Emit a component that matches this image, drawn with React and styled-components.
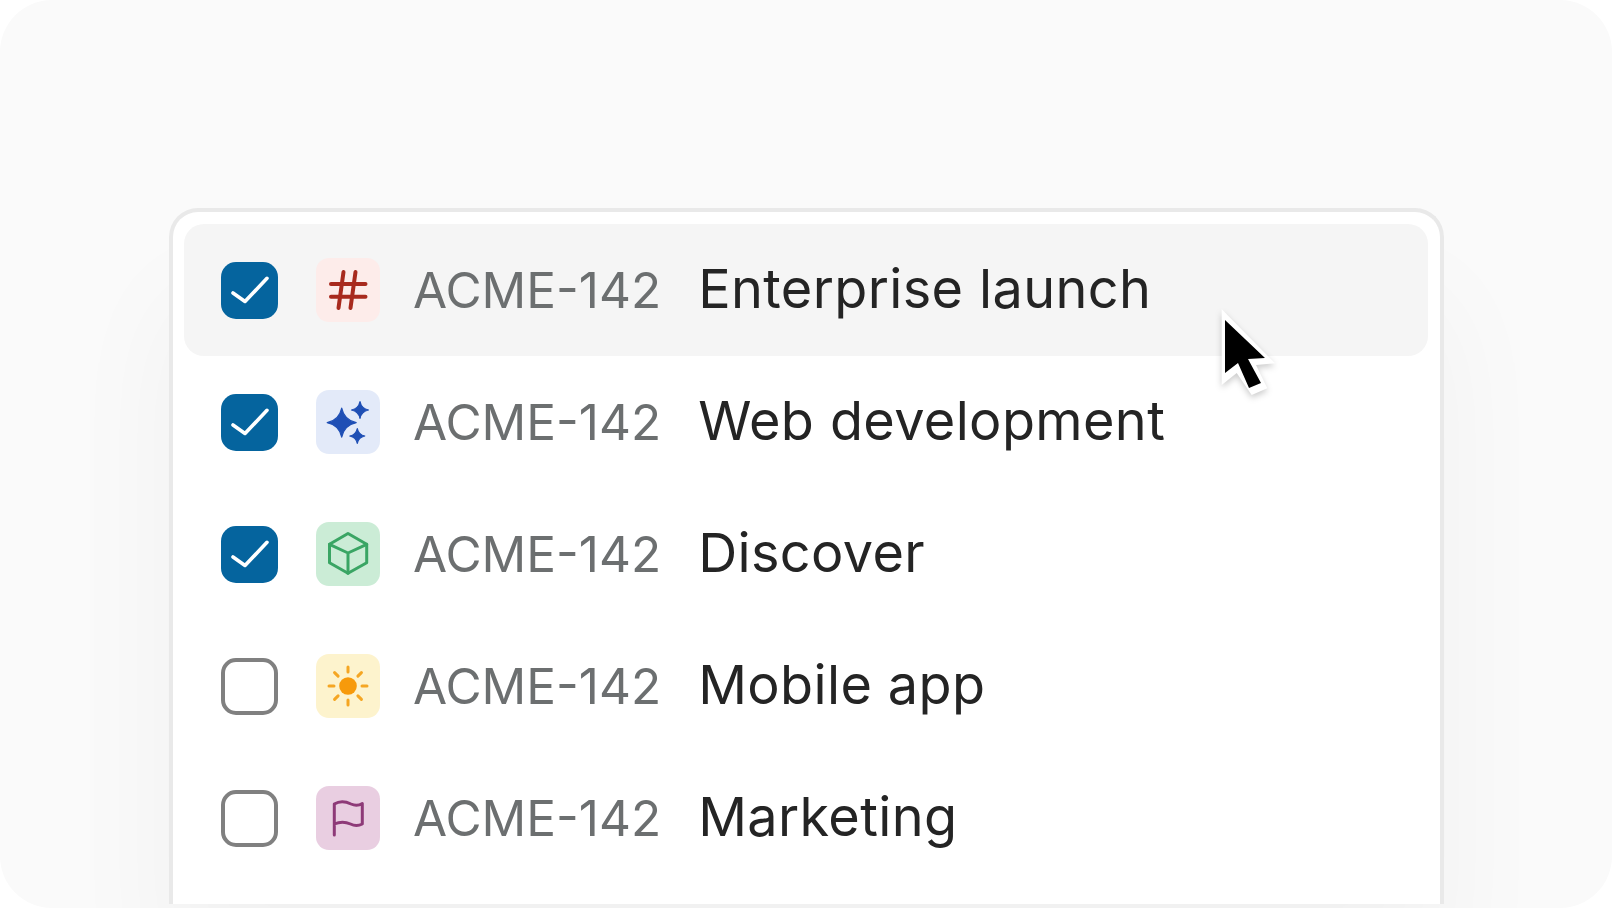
import React from "react";
import styled, { createGlobalStyle } from "styled-components";

const GlobalStyle = createGlobalStyle`
  html, body {
    margin: 0;
    background: #ffffff;
  }
`;

const Frame = styled.div`
  position: relative;
  box-sizing: border-box;
  width: 1612px;
  height: 908px;
  padding: 208px 168px 4px 169px;
  overflow: hidden;
  border-radius: 52px;
  background: #fafafa;
  font-family: Inter, "Liberation Sans", sans-serif;
`;

const Card = styled.div`
  box-sizing: border-box;
  height: 100%;
  padding: 12px 12px 0 11px;
  border: 4px solid #e9e9e9;
  border-bottom: none;
  border-radius: 29px 29px 0 0;
  background: #ffffff;
  box-shadow: 0 90px 120px rgba(0, 0, 0, 0.04);
`;

const Row = styled.div`
  display: flex;
  align-items: center;
  height: 132px;
  padding-left: 37px;
  border-radius: 20px;
  background: ${(p) => (p.$active ? "#f5f5f5" : "transparent")};
`;

const Check = styled.div`
  box-sizing: border-box;
  display: flex;
  align-items: center;
  justify-content: center;
  flex: none;
  width: 57px;
  height: 57px;
  margin-right: 38px;
  border-radius: 15px;
  border: ${(p) => (p.$checked ? "none" : "4px solid #808080")};
  background: ${(p) => (p.$checked ? "#05649e" : "#ffffff")};
`;

const Tile = styled.div`
  flex: none;
  width: 64px;
  height: 64px;
  margin-right: 33px;
  border-radius: 13px;
  background: ${(p) => p.$bg};

  svg {
    display: block;
  }
`;

const Label = styled.div`
  display: flex;
  align-items: baseline;
  padding-bottom: 1px;
`;

const Code = styled.span`
  flex: none;
  margin-right: 37px;
  font-size: 49.5px;
  line-height: 60px;
  color: #6c6f70;
`;

const Title = styled.span`
  font-size: 54px;
  line-height: 60px;
  letter-spacing: 0.38px;
  color: #242424;
`;

const Pointer = styled.svg`
  position: absolute;
  left: 1212px;
  top: 306px;
  filter: drop-shadow(0 3px 3px rgba(0, 0, 0, 0.2));
`;

const CheckMark = () => (
  <svg width="57" height="57" viewBox="0 0 57 57" fill="none">
    <path
      d="M12 31 L24 39.5 L46 16.3"
      stroke="#ffffff"
      strokeWidth="3.6"
      strokeLinecap="round"
      strokeLinejoin="round"
    />
  </svg>
);

const IconSvg = ({ children, ...rest }) => (
  <svg width="64" height="64" viewBox="0 0 64 64" fill="none" {...rest}>
    {children}
  </svg>
);

const HashIcon = () => (
  <IconSvg stroke="#a82a1e" strokeWidth="4" strokeLinecap="round">
    <path d="M27.5 14 L22.5 50 M39.5 14 L34.5 50 M15 26 H49.5 M15 38.7 H49.5" />
  </IconSvg>
);

const star = (x, y, r) => {
  const c = r * 0.17;
  return `M${x} ${y - r} Q${x + c} ${y - c} ${x + r} ${y} Q${x + c} ${y + c} ${x} ${y + r} Q${x - c} ${y + c} ${x - r} ${y} Q${x - c} ${y - c} ${x} ${y - r}Z`;
};

const SparkIcon = () => (
  <IconSvg fill="#1f4fb5" stroke="#1f4fb5" strokeWidth="1.2" strokeLinejoin="round">
    <path d={star(25.7, 32.7, 14.5)} />
    <path d={star(44, 20, 8.5)} />
    <path d={star(41.3, 46, 7.5)} />
  </IconSvg>
);

const CubeIcon = () => (
  <IconSvg stroke="#3aa564" strokeWidth="3" strokeLinejoin="round" strokeLinecap="round">
    <path d="M32 11.5 L50.7 22.3 V40.7 L32 51.3 L13.5 40.7 V22.3 Z" />
    <path d="M13.5 22.3 L32 31 L50.7 22.3 M32 31 V51.3" />
  </IconSvg>
);

const SunIcon = () => {
  const rays = [0, 45, 90, 135, 180, 225, 270, 315];
  return (
    <IconSvg stroke="#f5a623" strokeWidth="3" strokeLinecap="round">
      <circle cx="32" cy="32" r="8.8" fill="#f79a0b" stroke="none" />
      {rays.map((a) => (
        <line key={a} x1="32" y1="13" x2="32" y2="18" transform={`rotate(${a} 32 32)`} />
      ))}
    </IconSvg>
  );
};

const FlagIcon = () => (
  <IconSvg stroke="#8e3a78" strokeWidth="3" strokeLinecap="round" strokeLinejoin="round">
    <path d="M18.3 49 V18 C24 14.5 30 15.5 35 18 C39 19.8 43 19.5 46.3 17.5 V38 C42 40.2 38.5 40 34.5 38 C29 35.5 24 35.5 18.3 38" />
  </IconSvg>
);

const items = [
  { title: "Enterprise launch", checked: true, bg: "#fdecea", Icon: HashIcon },
  { title: "Web development", checked: true, bg: "#e3eaf9", Icon: SparkIcon },
  { title: "Discover", checked: true, bg: "#cbecd6", Icon: CubeIcon },
  { title: "Mobile app", checked: false, bg: "#fdf3cd", Icon: SunIcon },
  { title: "Marketing", checked: false, bg: "#e9cee1", Icon: FlagIcon },
];

const App = () => {
  return (
    <Frame>
      <GlobalStyle />
      <Card>
        {items.map(({ title, checked, bg, Icon }, i) => (
          <Row key={title} $active={i === 0}>
            <Check $checked={checked}>{checked && <CheckMark />}</Check>
            <Tile $bg={bg}>
              <Icon />
            </Tile>
            <Label>
              <Code>ACME-142</Code>
              <Title>{title}</Title>
            </Label>
          </Row>
        ))}
      </Card>
      <Pointer width="66" height="96" viewBox="0 0 66 96">
        <path d="M9.7 3.3 V79 L24.7 67 L39.7 89 L55.3 82.3 L44 59 L63 57.3 Z" fill="#ffffff" />
        <path d="M13 14 V67 L26 57 L37 82 L49 77 L36 53 L53 52 Z" fill="#000000" />
      </Pointer>
    </Frame>
  );
};

export default App;
